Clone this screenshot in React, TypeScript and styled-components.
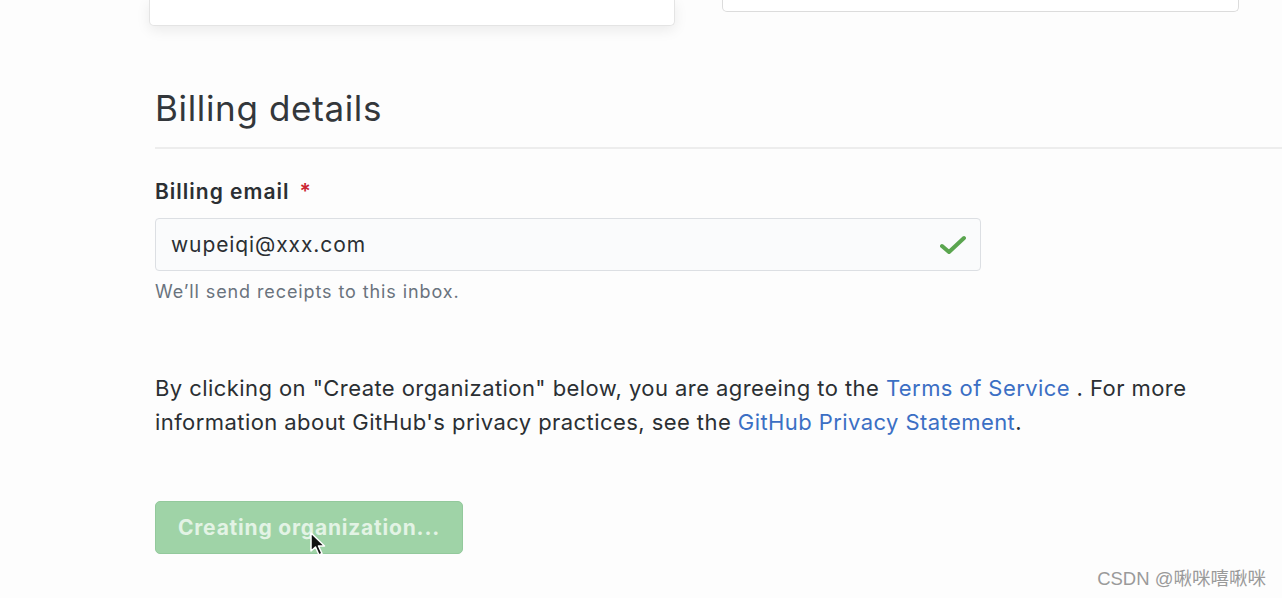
import styled, { createGlobalStyle } from 'styled-components';

const Global = createGlobalStyle`
  html, body { margin: 0; padding: 0; background: #fdfdfd; }
  body { font-family: Inter, "Liberation Sans", Arial, sans-serif; color: #24292e; }
`;

const Page = styled.div`
  position: relative;
  width: 1282px;
  height: 598px;
  overflow: hidden;
`;

const CardRow = styled.div`
  display: flex;
  align-items: flex-start;
  padding-left: 149px;
  gap: 47px;
`;

const Card = styled.div<{ $w: number; $h: number; $raised?: boolean }>`
  width: ${p => p.$w}px;
  height: ${p => p.$h}px;
  box-sizing: border-box;
  background: #fff;
  border: 1px solid ${p => (p.$raised ? '#e4e4e4' : '#dcdcdc')};
  border-top: none;
  border-radius: 0 0 5px 5px;
  box-shadow: ${p => (p.$raised ? '0 4px 14px rgba(0,0,0,0.08)' : 'none')};
`;

const Section = styled.div`
  padding-left: 155px;
  margin-top: 60px;
`;

const Heading = styled.h2`
  margin: 0;
  font-size: 35px;
  font-weight: 400;
  color: #33373b;
  line-height: 44px;
  letter-spacing: 0.65px;
`;

const Divider = styled.div`
  height: 2px;
  background: #ededed;
  margin-top: 17px;
`;

const Label = styled.div`
  margin-top: 30px;
  font-size: 21px;
  font-weight: 600;
  color: #2b2f33;
  line-height: 26px;
  letter-spacing: 1px;
`;

const Required = styled.span`
  color: #cb2431;
  margin-left: 10px;
`;

const InputBox = styled.div`
  margin-top: 13px;
  width: 826px;
  height: 53px;
  box-sizing: border-box;
  border: 1px solid #dcdfe3;
  border-radius: 4px;
  background: #fafbfc;
  display: flex;
  align-items: center;
  justify-content: space-between;
  padding: 0 14px 0 15px;
  font-size: 21px;
  letter-spacing: 0.9px;
  color: #2b2f33;
`;

const Note = styled.div`
  margin-top: 10px;
  font-size: 18px;
  letter-spacing: 0.9px;
  color: #6a737d;
`;

const Terms = styled.p`
  margin: 69px 0 0;
  font-size: 22px;
  letter-spacing: 0.43px;
  line-height: 34px;
  color: #2b2f33;
  width: 1080px;
`;

const Link = styled.a`
  color: #3b6fc4;
  text-decoration: none;
`;

const Button = styled.button`
  margin-top: 62px;
  width: 308px;
  height: 53px;
  border: 1px solid #93c99c;
  border-radius: 5px;
  background: #9fd3a7;
  color: #e3f3e5;
  font-family: Inter, "Liberation Sans", Arial, sans-serif;
  font-size: 21px;
  letter-spacing: 0.8px;
  font-weight: 700;
  padding: 0;
  cursor: default;
`;

const Cursor = styled.svg`
  position: absolute;
  left: 310px;
  top: 532px;
`;

const Watermark = styled.div`
  position: absolute;
  right: 16px;
  bottom: 8px;
  font-size: 18.5px;
  color: #9a9a9a;
  font-family: "Liberation Sans", "Noto Sans CJK SC", sans-serif;
`;

export default function App() {
  return (
    <Page>
      <Global />
      <CardRow>
        <Card $w={526} $h={26} $raised />
        <Card $w={517} $h={12} />
      </CardRow>
      <Section>
        <Heading>Billing details</Heading>
        <Divider />
        <Label>
          Billing email<Required>*</Required>
        </Label>
        <InputBox>
          <span>wupeiqi@xxx.com</span>
          <svg width="26" height="20" viewBox="0 0 26 20">
            <path d="M2 11 L9 17 L24 3" fill="none" stroke="#5aa54f" strokeWidth="4" strokeLinecap="round" strokeLinejoin="round" />
          </svg>
        </InputBox>
        <Note>We’ll send receipts to this inbox.</Note>
        <Terms>
          By clicking on "Create organization" below, you are agreeing to the <Link href="#">Terms of Service</Link> . For more information about GitHub's privacy practices, see the <Link href="#">GitHub Privacy Statement</Link>.
        </Terms>
        <Button>Creating organization...</Button>
      </Section>
      <Cursor width="18" height="26" viewBox="0 0 18 26">
        <path d="M1 1 L1 19 L5.5 15 L9 23 L12 21.5 L8.5 14 L14.5 14 Z" fill="#111" stroke="#fff" strokeWidth="1.5" strokeLinejoin="round" />
      </Cursor>
      <Watermark>CSDN @啾咪嘻啾咪</Watermark>
    </Page>
  );
}
